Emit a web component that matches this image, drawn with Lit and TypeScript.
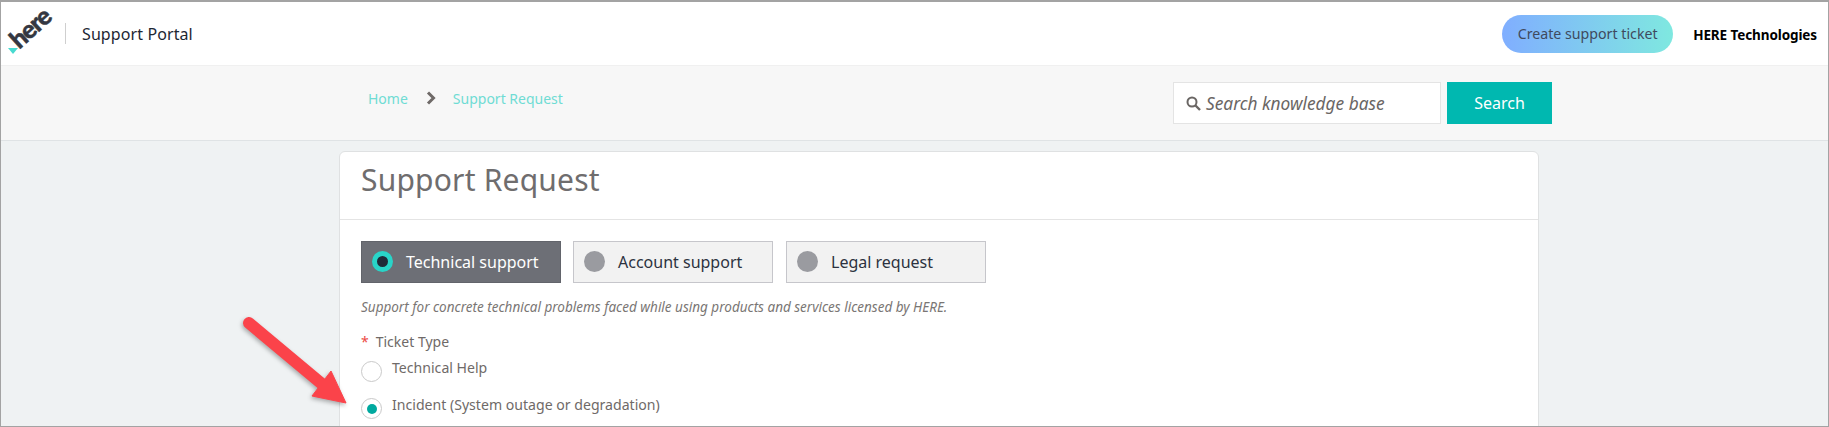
import { LitElement, html, css } from "lit";
import { customElement } from "lit/decorators.js";

@customElement("app-root")
export class AppRoot extends LitElement {
  static styles = css`
    :host {
      display: block;
      position: relative;
      width: 1829px;
      height: 427px;
      overflow: hidden;
      box-sizing: border-box;
      border-top: 2px solid #a3a3a3;
      border-left: 1px solid #a3a3a3;
      border-right: 1px solid #a3a3a3;
      border-bottom: 1px solid #a3a3a3;
      background: #eff2f3;
      font-family: "Noto Sans", sans-serif;
      color: #6f6a68;
    }
    * { box-sizing: border-box; }
    .top {
      height: 63px;
      background: #fff;
      display: flex;
      align-items: center;
      padding: 0 11px 0 7px;
    }
    .logo {
      width: 44px;
      height: 44px;
      position: relative;
      flex: none;
      margin-right: 13px;
    }
    .logo-text {
      position: absolute;
      left: -1px;
      top: 3px;
      font: 900 25px/25px "Lato", sans-serif;
      letter-spacing: -1.2px;
      color: #343741;
      -webkit-text-stroke: .5px #343741;
      transform: rotate(-42deg);
      transform-origin: 50% 50%;
    }
    .logo-tri {
      position: absolute;
      left: 0;
      top: 36px;
      width: 0;
      height: 0;
      border-left: 5px solid transparent;
      border-right: 5px solid transparent;
      border-top: 6px solid #48dad0;
    }
    .sep {
      width: 1px;
      height: 21px;
      background: #cfcfcf;
      margin-right: 16px;
    }
    .portal {
      font-size: 16px;
      color: #1d2733;
      flex: 1;
      letter-spacing: .1px;
    }
    .create {
      width: 171px;
      height: 38px;
      border-radius: 19px;
      background: linear-gradient(90deg, #80aeff, #7fe8e0);
      color: #3f4a5e;
      font-size: 14.2px;
      display: flex;
      align-items: center;
      justify-content: center;
      margin-right: 20px;
    }
    .org {
      font-size: 13.5px;
      font-weight: 700;
      color: #000;
      white-space: nowrap;
      letter-spacing: -0.1px;
      margin-top: 3px;
    }
    .sub {
      height: 76px;
      background: #f7f7f7;
      border-top: 1px solid #f0f0f0;
      border-bottom: 1px solid #dfe3e5;
      display: grid;
      grid-template-columns: 367px 805px auto;
      padding-top: 16px;
    }
    .crumbs {
      grid-column: 2;
      display: flex;
      align-items: center;
      height: 26px;
      font-size: 14px;
      color: #6fdcd4;
      margin-top: 3px;
    }
    .crumbs svg { margin: 0 17px 0 18px; }
    .search {
      grid-column: 3;
      display: flex;
      gap: 6px;
    }
    .box {
      width: 268px;
      height: 42px;
      background: #fff;
      border: 1px solid #e4e4e4;
      display: flex;
      align-items: center;
      padding-left: 12px;
      gap: 5px;
      font-size: 17.3px;
      font-style: italic;
      color: #6a6664;
    }
    .btn {
      width: 105px;
      height: 42px;
      background: #00b8b0;
      color: #fff;
      font-size: 16px;
      display: flex;
      align-items: center;
      justify-content: center;
    }
    .main { padding: 10px 0 0 338px; }
    .card {
      width: 1200px;
      height: 400px;
      background: #fff;
      border: 1px solid #dfe1e2;
      border-radius: 6px;
    }
    .head {
      height: 68px;
      border-bottom: 1px solid #e4e4e4;
      padding: 8px 21px 0;
      font-size: 30px;
      letter-spacing: .2px;
      line-height: 40px;
      color: #6f6d6e;
    }
    .body { padding: 21px 21px 0; }
    .tabs { display: flex; gap: 12px; }
    .tab {
      width: 200px;
      height: 42px;
      background: #f2f2f2;
      border: 1px solid #c6c6cb;
      display: flex;
      align-items: center;
      padding-left: 10px;
      gap: 13px;
      font-size: 16px;
      color: #2c3240;
    }
    .tab:last-child { margin-left: 1px; }
    .tab.on {
      background: #6d6f76;
      border-color: #62646b;
      color: #fff;
    }
    .dot {
      width: 21px;
      height: 21px;
      border-radius: 50%;
      background: #9a9ba0;
      flex: none;
      margin-top: -1px;
    }
    .on .dot {
      background: #1f2a38;
      border: 5px solid #29d4c8;
    }
    .desc {
      font-size: 13.5px;
      font-style: italic;
      color: #7a7674;
      margin-top: 15px;
      line-height: 18px;
      white-space: nowrap;
    }
    .label {
      margin-top: 17px;
      font-size: 14px;
      line-height: 18px;
      color: #6f6a68;
      display: flex;
      gap: 7px;
    }
    .star { color: #ec4a45; font-size: 14px; }
    .opts { display: flex; flex-direction: column; gap: 14px; margin-top: 8px; }
    .opt { display: flex; gap: 10px; font-size: 14.1px; line-height: 18px; color: #6f6a68; }
    .radio {
      width: 21px;
      height: 21px;
      border-radius: 50%;
      background: #fff;
      border: 1px solid #c9c9c9;
      flex: none;
      margin-top: 2px;
      display: flex;
      align-items: center;
      justify-content: center;
    }
    .radio.sel::after {
      content: "";
      width: 10px;
      height: 10px;
      border-radius: 50%;
      background: #00a99f;
    }
    .arrow {
      position: absolute;
      left: 0;
      top: 0;
      pointer-events: none;
      filter: drop-shadow(-1px 2px 2px rgba(0,0,0,.3));
    }
  `;

  render() {
    return html`
      <div class="top">
        <div class="logo">
          <span class="logo-text">here</span>
          <span class="logo-tri"></span>
        </div>
        <div class="sep"></div>
        <div class="portal">Support Portal</div>
        <div class="create">Create support ticket</div>
        <div class="org">HERE Technologies</div>
      </div>
      <div class="sub">
        <div class="crumbs">
          <span>Home</span>
          <svg width="10" height="14" viewBox="0 0 10 14"><path d="M2 1.5 7.5 7 2 12.5" fill="none" stroke="#6f6a68" stroke-width="3"/></svg>
          <span>Support Request</span>
        </div>
        <div class="search">
          <div class="box">
            <svg width="15" height="15" viewBox="0 0 15 15"><circle cx="6" cy="6" r="4.5" fill="none" stroke="#6a6664" stroke-width="2"/><path d="M9.5 9.5 14 14" stroke="#6a6664" stroke-width="2.4"/></svg>
            <span>Search knowledge base</span>
          </div>
          <div class="btn">Search</div>
        </div>
      </div>
      <div class="main">
        <div class="card">
          <div class="head">Support Request</div>
          <div class="body">
            <div class="tabs">
              <div class="tab on"><span class="dot"></span>Technical support</div>
              <div class="tab"><span class="dot"></span>Account support</div>
              <div class="tab"><span class="dot"></span>Legal request</div>
            </div>
            <div class="desc">Support for concrete technical problems faced while using products and services licensed by HERE.</div>
            <div class="label"><span class="star">*</span><span>Ticket Type</span></div>
            <div class="opts">
              <div class="opt"><span class="radio"></span><span>Technical Help</span></div>
              <div class="opt"><span class="radio sel"></span><span>Incident (System outage or degradation)</span></div>
            </div>
          </div>
        </div>
      </div>
      <svg class="arrow" width="400" height="425" viewBox="0 2 400 425">
        <path d="M248 323 321 384" stroke="#fb434a" stroke-width="12" stroke-linecap="round" fill="none"/>
        <path d="M330 371 345 403 311 396Z" fill="#fb434a" stroke="#fb434a" stroke-width="1"/>
      </svg>
    `;
  }
}
